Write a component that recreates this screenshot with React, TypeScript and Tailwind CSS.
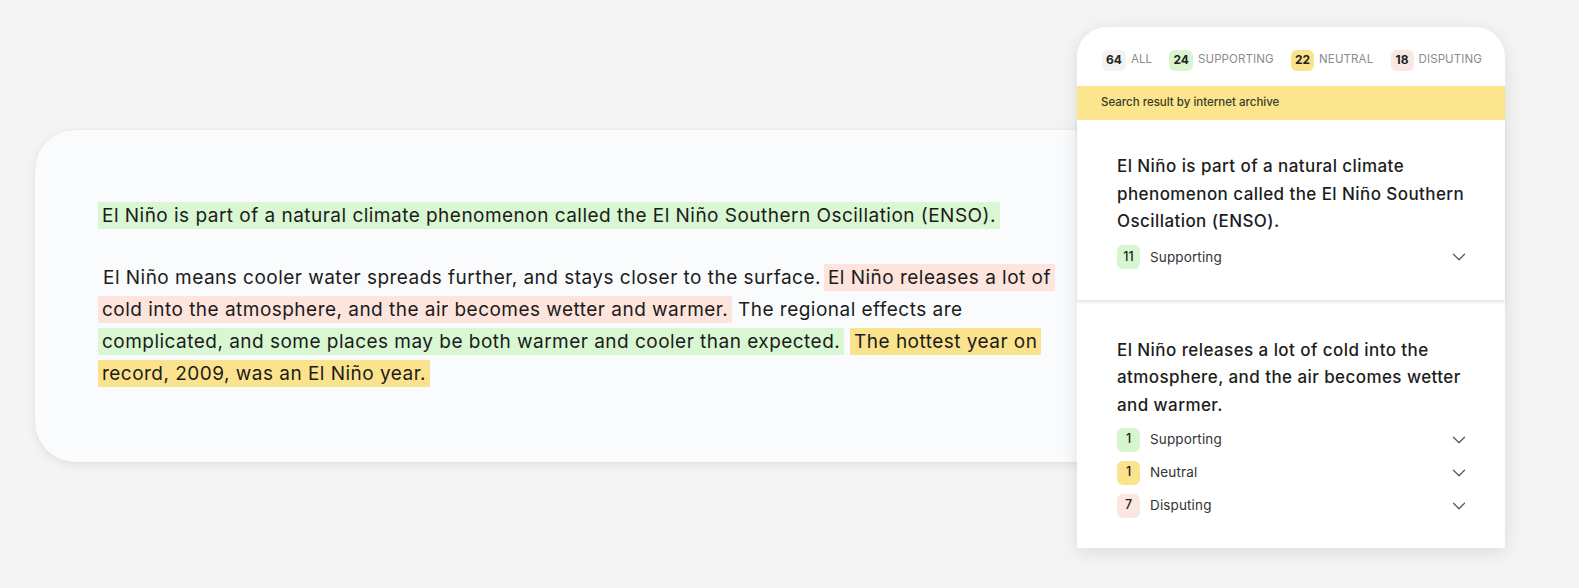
import React from "react";
import { ChevronDown } from "lucide-react";

const font = { fontFamily: "Inter, 'Noto Sans', sans-serif" };

function Tab({ n, label, badge }: { n: string; label: string; badge: string }) {
  return (
    <div className="flex items-center gap-[5px]">
      <span className={`flex h-[21px] min-w-[23px] items-center justify-center rounded-[6px] px-[4px] text-[12px] font-bold text-[#222] ${badge}`}>
        {n}
      </span>
      <span className="text-[11.5px] tracking-[0.01em] text-[#8b8b8b]">{label}</span>
    </div>
  );
}

function Row({ n, label, badge }: { n: string; label: string; badge: string }) {
  return (
    <div className="flex h-[33px] items-center">
      <span className={`flex h-[24px] w-[23px] items-center justify-center rounded-[6px] text-[12.5px] font-medium text-[#222] ${badge}`}>
        {n}
      </span>
      <span className="ml-[10px] text-[13.5px] tracking-[0.01em] text-[#333]">{label}</span>
      <ChevronDown className="ml-auto mr-[-6px] text-[#555]" size={22} strokeWidth={1.3} />
    </div>
  );
}

export default function App() {
  const hl = "box-decoration-clone px-[4px] py-[2px]";
  return (
    <div className="h-[588px] w-[1579px] overflow-hidden bg-[#f4f4f4]" style={font}>
      <div className="flex items-start">
        <div className="ml-[35px] mt-[130px] h-[332px] w-[1085px] shrink-0 rounded-[40px] bg-[#f9fbfc] shadow-[0_3px_10px_rgba(0,0,0,0.08),0_0_2px_rgba(0,0,0,0.06)]">
          <div className="ml-[63px] mt-[70px] w-[965px] text-[19px] leading-[32px] tracking-[0.025em] text-[#1b1b1b]">
            <p>
              <span className={`${hl} bg-[#d9f7d2]`}>
                El Niño is part of a natural climate phenomenon called the El Niño Southern Oscillation (ENSO).
              </span>
            </p>
            <p className="mt-[30px]">
              <span className="pl-[5px] pr-[3px]">
                El Niño means cooler water spreads further, and stays closer to the surface.
              </span>
              <span className={`${hl} bg-[#fde4dc]`}>
                El Niño releases a lot of cold into the atmosphere, and the air becomes wetter and warmer.
              </span>{" "}
              The regional effects are{" "}
              <span className={`${hl} bg-[#d9f7d2]`}>
                complicated, and some places may be both warmer and cooler than expected.
              </span>{" "}
              <span className={`${hl} bg-[#fbe38e]`}>
                The hottest year on record, 2009, was an El Niño year.
              </span>
            </p>
          </div>
        </div>

        <div className="relative z-10 -ml-[43px] mt-[27px] flex h-[521px] w-[428px] shrink-0 flex-col rounded-t-[30px] bg-white shadow-[0_4px_18px_rgba(0,0,0,0.10)]">
          <div className="flex h-[59px] items-center justify-between pl-[25px] pr-[23px] pt-[7px]">
            <Tab n="64" label="ALL" badge="bg-[#f3f3f3]" />
            <Tab n="24" label="SUPPORTING" badge="bg-[#d7f6d0]" />
            <Tab n="22" label="NEUTRAL" badge="bg-[#fbe38b]" />
            <Tab n="18" label="DISPUTING" badge="bg-[#fbe7e1]" />
          </div>
          <div className="flex h-[34px] items-center bg-[#fce68d] pl-[24px] text-[11.5px] font-medium text-[#3a3a2a]">
            Search result by internet archive
          </div>

          <div className="relative z-10 bg-white pb-[26px] pl-[40px] pr-[41px] pt-[33px] shadow-[0_2px_3px_rgba(0,0,0,0.12)]">
            <p className="mr-[-14px] text-[17px] font-medium leading-[27.5px] tracking-[0.025em] text-[#1d1d1d]">
              El Niño is part of a natural climate phenomenon called the El Niño Southern Oscillation (ENSO).
            </p>
            <div className="mt-[5px]">
              <Row n="11" label="Supporting" badge="bg-[#d7f6d0]" />
            </div>
          </div>

          <div className="mt-[4px] flex-1 bg-white pl-[40px] pr-[41px] pt-[33px]">
            <p className="mr-[-14px] text-[17px] font-medium leading-[27.5px] tracking-[0.025em] text-[#1d1d1d]">
              El Niño releases a lot of cold into the atmosphere, and the air becomes wetter and warmer.
            </p>
            <div className="mt-[4px]">
              <Row n="1" label="Supporting" badge="bg-[#d7f6d0]" />
              <Row n="1" label="Neutral" badge="bg-[#fbe38b]" />
              <Row n="7" label="Disputing" badge="bg-[#fbe7e1]" />
            </div>
          </div>
        </div>
      </div>
    </div>
  );
}
